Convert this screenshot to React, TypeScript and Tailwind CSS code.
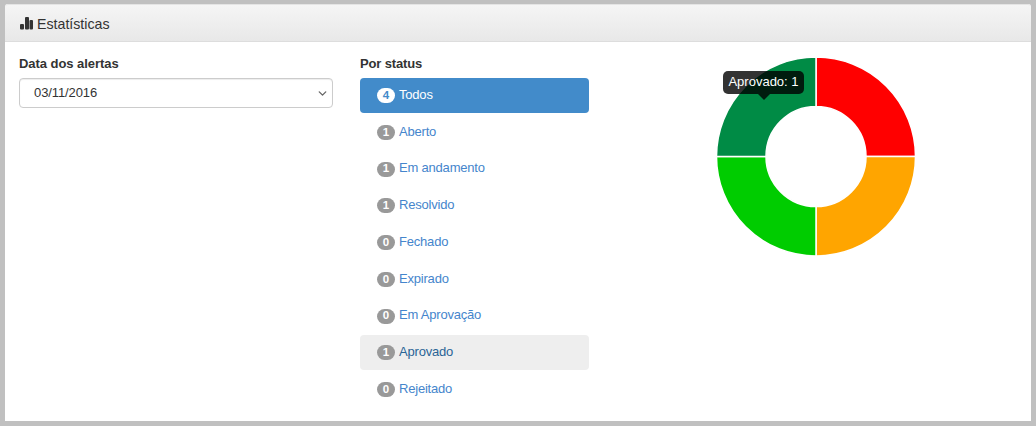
import { ChevronDown } from "lucide-react";

const statuses = [
  { label: "Todos", count: 4, state: "active" },
  { label: "Aberto", count: 1 },
  { label: "Em andamento", count: 1 },
  { label: "Resolvido", count: 1 },
  { label: "Fechado", count: 0 },
  { label: "Expirado", count: 0 },
  { label: "Em Aprovação", count: 0 },
  { label: "Aprovado", count: 1, state: "hover" },
  { label: "Rejeitado", count: 0 },
];

function Donut() {
  return (
    <svg width="200" height="200" viewBox="0 0.5 200 200" className="block">
      <path d="M100 .5A99.5 99.5 0 0 1 199.5 100H150A50 50 0 0 0 100 50Z" fill="#ff0000" stroke="#fff" strokeWidth="1.5" />
      <path d="M199.5 100A99.5 99.5 0 0 1 100 199.5V150A50 50 0 0 0 150 100Z" fill="#ffa500" stroke="#fff" strokeWidth="1.5" />
      <path d="M100 199.5A99.5 99.5 0 0 1 .5 100H50A50 50 0 0 0 100 150Z" fill="#00cc00" stroke="#fff" strokeWidth="1.5" />
      <path d="M.5 100A99.5 99.5 0 0 1 100 .5V50A50 50 0 0 0 50 100Z" fill="#008b45" stroke="#fff" strokeWidth="1.5" />
    </svg>
  );
}

export default function App() {
  return (
    <div className="h-[426px] w-[1036px] overflow-hidden bg-[#c0c0c0] pt-1 pr-[5px] pb-[5px] pl-[5px] font-['Liberation_Sans',Arial,sans-serif] text-[13px] text-[#333]">
      <div className="h-full rounded-t-[3px] bg-white">
        <div className="flex h-[38px] items-center gap-[4px] rounded-t-[3px] border-t border-b border-t-[#e4e4e4] border-b-[#ddd] bg-gradient-to-b from-[#f5f5f5] to-[#e8e8e8] px-[15px]">
          <svg width="13" height="13" viewBox="0 0 13 13" fill="#333" className="mt-[1px]">
            <rect x="0" y="7" width="4" height="5.5" rx="1" />
            <rect x="5" y="0" width="4" height="12.5" rx="1" />
            <rect x="9.5" y="3" width="3.5" height="9.5" rx="1" />
          </svg>
          <span className="mt-[3px] text-[14.2px]">Estatísticas</span>
        </div>

        <div className="flex pt-[12px] pl-[14px]">
          <div className="w-[314px]">
            <div className="mb-[4px] h-5 leading-5 font-bold tracking-[-0.05px]">Data dos alertas</div>
            <div className="flex h-[30px] items-center justify-between rounded border border-[#ccc] pr-[3px] pl-[14px] shadow-[inset_0_1px_1px_rgba(0,0,0,0.075)]">
              <span className="tracking-[-0.1px]">03/11/2016</span>
              <ChevronDown size={13} strokeWidth={2.5} className="text-[#666]" />
            </div>
          </div>

          <div className="ml-[27px] w-[229px]">
            <div className="mb-[4px] h-5 leading-5 font-bold tracking-[-0.15px]">Por status</div>
            <ul className="flex flex-col gap-[1.75px]">
              {statuses.map((s) => (
                <li
                  key={s.label}
                  className={
                    s.state === "active"
                      ? "flex h-[35px] items-center gap-[4px] rounded bg-[#428bca] pl-[17px] text-white"
                      : s.state === "hover"
                        ? "flex h-[35px] items-center gap-[4px] rounded bg-[#eee] pl-[17px] text-[#2a6496]"
                        : "flex h-[35px] items-center gap-[4px] rounded pl-[17px] text-[#4585cc]"
                  }
                >
                  <span
                    className={
                      s.state === "active"
                        ? "flex h-[15px] w-[18px] items-center justify-center rounded-[10px] bg-white text-[11.5px] font-bold text-[#428bca]"
                        : "flex h-[15px] w-[18px] items-center justify-center rounded-[10px] bg-[#999] text-[11.5px] font-bold text-white"
                    }
                  >
                    {s.count}
                  </span>
                  <span className="-mt-[2px] tracking-[-0.2px]">{s.label}</span>
                </li>
              ))}
            </ul>
          </div>

          <div className="relative ml-[127px] pt-[3px]">
            <Donut />
            <div className="absolute top-[17px] left-[7px] flex h-[23px] w-[81px] items-center justify-center rounded-[5px] bg-black/80 text-[13px] text-white">
              <span className="-mt-[1px]">Aprovado: 1</span>
              <span className="absolute top-[23px] left-[35px] border-x-[6px] border-t-[6px] border-x-transparent border-t-black/80" />
            </div>
          </div>
        </div>
      </div>
    </div>
  );
}
